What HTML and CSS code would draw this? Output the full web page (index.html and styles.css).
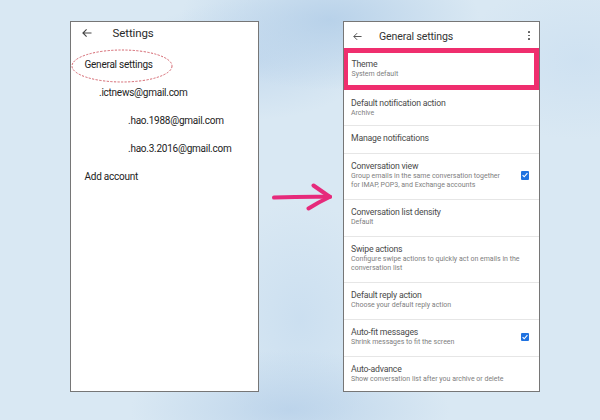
FILE: index.html
```html
<!DOCTYPE html>
<html lang="en">
<head>
<meta charset="utf-8">
<title>Gmail settings</title>
<link rel="stylesheet" href="styles.css">
</head>
<body>
<main class="stage">
  <section class="phone phone-left">
    <header class="bar bar-left">
      <svg class="back" viewBox="0 0 10 10" width="10" height="10"><path d="M9.5 5H1M4.6 1.3L0.9 5l3.7 3.7" fill="none" stroke="#444" stroke-width="1.1"/></svg>
      <span class="bar-title-left">Settings</span>
    </header>
    <ul class="accounts">
      <li class="acc">General settings</li>
      <li class="acc indent-1">.ictnews@gmail.com</li>
      <li class="acc indent-2">.hao.1988@gmail.com</li>
      <li class="acc indent-2">.hao.3.2016@gmail.com</li>
      <li class="acc">Add account</li>
    </ul>
    <svg class="circle-mark" viewBox="0 0 102 34" width="102" height="34"><ellipse cx="51" cy="17" rx="50" ry="16" fill="none" stroke="#c9414c" stroke-width="0.8" stroke-dasharray="2.2 1.4"/></svg>
  </section>

  <svg class="pointer" viewBox="0 0 60 28" width="60" height="28"><g fill="none" stroke="#e62a7b" stroke-width="4" stroke-linecap="round" stroke-linejoin="round"><path d="M2 14.6Q30 13.4 58 13.8"/><path d="M41.5 2.5Q50 8.5 58 13.8Q47 19 36.5 25.5"/></g></svg>

  <section class="phone phone-right">
    <header class="bar bar-right">
      <svg class="back" viewBox="0 0 10 10" width="9" height="9"><path d="M9.5 5H1M4.6 1.3L0.9 5l3.7 3.7" fill="none" stroke="#555" stroke-width="1.1"/></svg>
      <span class="bar-title-right">General settings</span>
      <span class="kebab"><i></i><i></i><i></i></span>
    </header>
    <div class="settings">
      <div class="row row-marked">
        <div class="row-text"><div class="t">Theme</div><div class="s">System default</div></div>
      </div>
      <div class="row row-after-mark">
        <div class="row-text"><div class="t">Default notification action</div><div class="s">Archive</div></div>
      </div>
      <div class="row">
        <div class="row-text"><div class="t">Manage notifications</div></div>
      </div>
      <div class="row">
        <div class="row-text"><div class="t">Conversation view</div><div class="s">Group emails in the same conversation together<br>for IMAP, POP3, and Exchange accounts</div></div>
        <span class="check"><svg viewBox="0 0 10 10" width="8" height="8"><path d="M2 5.2l2 2 4-4.4" fill="none" stroke="#fff" stroke-width="1.4"/></svg></span>
      </div>
      <div class="row">
        <div class="row-text"><div class="t">Conversation list density</div><div class="s">Default</div></div>
      </div>
      <div class="row">
        <div class="row-text"><div class="t">Swipe actions</div><div class="s">Configure swipe actions to quickly act on emails in the<br>conversation list</div></div>
      </div>
      <div class="row">
        <div class="row-text"><div class="t">Default reply action</div><div class="s">Choose your default reply action</div></div>
      </div>
      <div class="row">
        <div class="row-text"><div class="t">Auto-fit messages</div><div class="s">Shrink messages to fit the screen</div></div>
        <span class="check"><svg viewBox="0 0 10 10" width="8" height="8"><path d="M2 5.2l2 2 4-4.4" fill="none" stroke="#fff" stroke-width="1.4"/></svg></span>
      </div>
      <div class="row">
        <div class="row-text"><div class="t">Auto-advance</div><div class="s">Show conversation list after you archive or delete</div></div>
      </div>
    </div>
  </section>
</main>
</body>
</html>
```

FILE: styles.css
```css
* { box-sizing: border-box; }

html, body {
  margin: 0;
  height: 100%;
}

body {
  font-family: Roboto, "Liberation Sans", sans-serif;
  background-color: #d9e8f3;
  background-image:
    radial-gradient(ellipse 150px 70px at 330px 20px, rgba(176, 204, 231, 0.8), rgba(176, 204, 231, 0) 100%),
    radial-gradient(ellipse 120px 60px at 250px 60px, rgba(188, 212, 236, 0.65), rgba(188, 212, 236, 0) 100%),
    radial-gradient(ellipse 160px 60px at 290px 410px, rgba(180, 206, 232, 0.75), rgba(180, 206, 232, 0) 100%),
    radial-gradient(ellipse 90px 120px at 300px 320px, rgba(194, 217, 238, 0.6), rgba(194, 217, 238, 0) 100%),
    radial-gradient(ellipse 120px 80px at 580px 60px, rgba(198, 220, 240, 0.55), rgba(198, 220, 240, 0) 100%);
  overflow: hidden;
}

.stage {
  display: flex;
  align-items: flex-start;
  padding: 21px 0 0 70px;
}

/* phone frames */
.phone {
  position: relative;
  height: 371px;
  background: #fff;
  border: 1.5px solid #767676;
  overflow: hidden;
}

.phone-left { width: 189px; }
.phone-right { width: 197px; }

/* left screen */
.bar-left {
  display: flex;
  align-items: center;
  height: 21.6px;
  padding-left: 10.5px;
  gap: 21px;
}

.bar-title-left {
  font-size: 11.5px;
  color: #2a2a2a;
  letter-spacing: -0.1px;
}

.accounts {
  list-style: none;
  margin: 0;
  padding: 7.5px 0 0 0;
}

.acc {
  height: 28px;
  line-height: 28px;
  padding-left: 13.5px;
  font-size: 10px;
  letter-spacing: -0.25px;
  color: #222;
}

.indent-1 { padding-left: 28px; }
.indent-2 { padding-left: 57px; }

.circle-mark {
  position: absolute;
  left: 0;
  top: 26.5px;
}

/* arrow between screens */
.pointer {
  flex: none;
  margin: 162px 11px 0 13px;
}

/* right screen */
.bar-right {
  display: flex;
  align-items: center;
  height: 26px;
  padding: 3px 0 0 9px;
}

.bar-right .back { flex: none; }

.bar-title-right {
  margin-left: 17px;
  font-size: 10.6px;
  letter-spacing: -0.15px;
  color: #333;
  flex: 1;
}

.kebab {
  display: flex;
  flex-direction: column;
  gap: 1.6px;
  margin-right: 9.5px;
  margin-top: -2px;
}

.kebab i {
  display: block;
  width: 1.7px;
  height: 1.7px;
  border-radius: 50%;
  background: #555;
}

.settings {
  display: flex;
  flex-direction: column;
}

.row {
  display: flex;
  align-items: center;
  padding: 7px 10px 9px 7px;
  border-bottom: 1px solid #e6e6e6;
}

.row-text { flex: 1; }

.row .t {
  font-size: 8.7px;
  line-height: 11px;
  letter-spacing: -0.2px;
  color: #4a4a4a;
}

.row .s {
  font-size: 7px;
  line-height: 9px;
  color: #808080;
}

/* highlighted first row */
.row-marked {
  position: relative;
  margin: 0 0 0 -1.5px;
  width: 196px;
  padding: 6px 6px 6px 4px;
  border: 5px solid #ef2e6e;
}

.row-after-mark {
  padding-top: 8px;
  padding-bottom: 7px;
}

.check {
  flex: none;
  width: 8.3px;
  height: 8.3px;
  border-radius: 1px;
  background: #1f72e0;
  display: flex;
  align-items: center;
  justify-content: center;
}
```
